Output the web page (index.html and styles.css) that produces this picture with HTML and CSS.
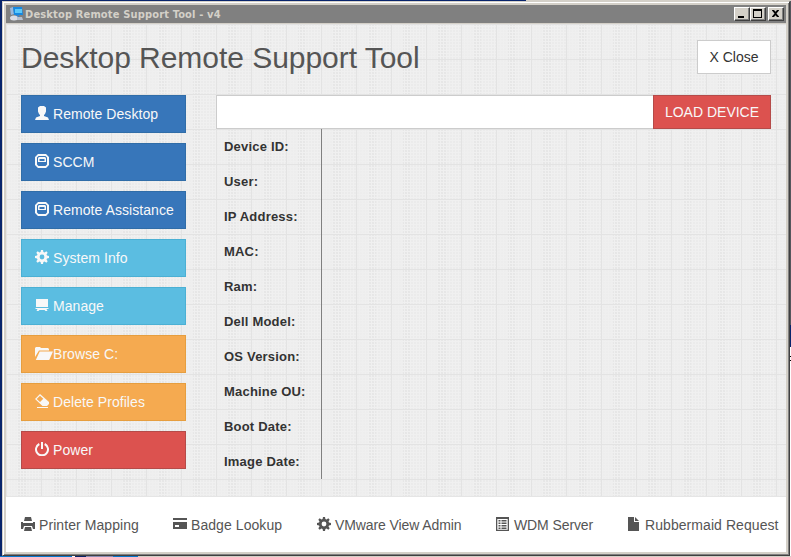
FILE: index.html
```html
<!DOCTYPE html>
<html lang="en">
<head>
<meta charset="utf-8">
<title>Desktop Remote Support Tool - v4</title>
<link rel="stylesheet" href="styles.css">
</head>
<body>
<svg width="0" height="0" class="defs">
  <symbol id="user" viewBox="0 0 14 14"><path d="M5 0h4l2 1.500v4L10 8 9 9v1l4 1.500L14 14H0l1-2.500L5 10V9L4 8 3 5.500v-4z"/></symbol>
  <symbol id="drive" viewBox="0 0 14 14"><path fill-rule="evenodd" d="M3 0h8l3 3v8l-3 3H3l-3-3V3zM3.500 2 2 3.500v7L3.500 12h7l1.500-1.500v-7L10.500 2zM3 4l1-1h6l1 1v4H3zm1.500 1v2h5V5z"/></symbol>
  <symbol id="cog" viewBox="0 0 14 14"><path fill-rule="evenodd" d="M6 0h2l.4 2 1.200.5L11.300 1.300l1.400 1.400-1.200 1.700.5 1.200 2 .4v2l-2 .4-.5 1.200 1.200 1.700-1.400 1.400-1.700-1.200-1.200.5L8 14H6l-.4-2-1.200-.5-1.700 1.200-1.400-1.400 1.200-1.700L2 8.400 0 8V6l2-.4.500-1.200-1.200-1.700 1.400-1.400 1.700 1.200L5.600 2zM7 4.600a2.400 2.400 0 1 0 0 4.800 2.400 2.400 0 0 0 0-4.800z"/></symbol>
  <symbol id="blackboard" viewBox="0 0 14 14"><path d="M1 1h12v8H1zM0.500 10h13v1h-2l1 2h-2l-1-1h-5l-1 1h-2l1-2h-2z"/></symbol>
  <symbol id="folder" viewBox="0 0 18 14"><path d="M0 2 1 1h4l1 1h7l1 1v1.500H4L0 11zM4.700 5.500H18L14.200 14H.8z"/></symbol>
  <symbol id="eraser" viewBox="0 0 14 14"><path fill-rule="evenodd" d="M5 0 14 8v2l-2 2H7.500L0 5zM5 1.700 1.700 5 5 8l3.300-3.300zM2 13h11v1H2z"/></symbol>
  <symbol id="power" viewBox="0 0 14 14"><path d="M4.300 2A6 6 0 1 0 9.700 2" fill="none" stroke="currentColor" stroke-width="2"/><path d="M6 0h2v7H6z"/></symbol>
  <symbol id="printer" viewBox="0 0 14 14"><path d="M4 0h6l1 4H3zM0 5h2v1h10V5h2v7h-2l-1-3H3l-1 3H0zM4 10h6l1 4H3z"/></symbol>
  <symbol id="card" viewBox="0 0 14 14"><path fill-rule="evenodd" d="M0 1h14v2H0zM0 5h14v7H0zM2 8v2h4V8z"/></symbol>
  <symbol id="list" viewBox="0 0 14 14"><path fill-rule="evenodd" d="M0 0h13v14H0zM1.300 2v10.700h10.400V2zM2.500 3h2v1.500h-2zm3 0h5v1.500h-5zm-3 2.500h2V7h-2zm3 0h5V7h-5zm-3 2.500h2v1.500h-2zm3 0h5v1.500h-5zm-3 2.500h2V12h-2zm3 0h5V12h-5z"/></symbol>
  <symbol id="file" viewBox="0 0 14 14"><path d="M1 0h6v5h5v9H1zM8 0l4 4H8z"/></symbol>
</svg>
<div class="window">
  <div class="titlebar">
    <svg class="appicon" width="16" height="16" viewBox="0 0 16 16"><path d="M1 2l3-1 1 7-3 1z" fill="#9ab8dc"/><path d="M4 1h9l1 8H5z" fill="#1589e2"/><path d="M6 3h7v4H6z" fill="#5ac8fa"/><path d="M7 9h3l1 3H6z" fill="#4583bd"/><ellipse cx="5" cy="12" rx="4" ry="2.500" fill="#d9dce4"/><path d="M8 11h5l1 3H8z" fill="#b6bfce"/></svg>
    <span class="caption">Desktop Remote Support Tool - v4</span>
    <div class="controls">
      <span class="ctl"><svg width="14" height="12"><path d="M3 8h6v2H3z"/></svg></span><span class="ctl"><svg width="14" height="12"><path fill-rule="evenodd" d="M2 1h9v9H2zM3 3v6h7V3z"/></svg></span><span class="ctl last"><svg width="14" height="12"><path d="M3 2h2l1.500 1.700L8 2h2v.5L7.500 5.500 10 8.500V9H8L6.500 7.300 5 9H3v-.5l2.500-3L3 2.500z"/></svg></span>
    </div>
  </div>
  <div class="main">
    <header><h1>Desktop Remote Support Tool</h1><button class="close">X Close</button></header>
    <div class="columns">
      <nav>
        <a class="btn blue"><svg><use href="#user"/></svg><span>Remote Desktop</span></a>
        <a class="btn blue"><svg><use href="#drive"/></svg><span>SCCM</span></a>
        <a class="btn blue"><svg><use href="#drive"/></svg><span>Remote Assistance</span></a>
        <a class="btn cyan"><svg><use href="#cog"/></svg><span>System Info</span></a>
        <a class="btn cyan"><svg><use href="#blackboard"/></svg><span>Manage</span></a>
        <a class="btn orange"><svg class="wide"><use href="#folder"/></svg><span>Browse C:</span></a>
        <a class="btn orange"><svg><use href="#eraser"/></svg><span>Delete Profiles</span></a>
        <a class="btn red"><svg><use href="#power"/></svg><span>Power</span></a>
      </nav>
      <section>
        <div class="search"><input type="text" aria-label="Device"><button class="load">LOAD DEVICE</button></div>
        <dl>
          <dt>Device ID:</dt><dt>User:</dt><dt>IP Address:</dt><dt>MAC:</dt><dt>Ram:</dt><dt>Dell Model:</dt><dt>OS Version:</dt><dt>Machine OU:</dt><dt>Boot Date:</dt><dt>Image Date:</dt>
        </dl>
      </section>
    </div>
  </div>
  <footer>
    <a><svg><use href="#printer"/></svg>Printer Mapping</a>
    <a><svg><use href="#card"/></svg>Badge Lookup</a>
    <a class="tight"><svg><use href="#cog"/></svg>VMware View Admin</a>
    <a class="tight"><svg><use href="#list"/></svg>WDM Server</a>
    <a><svg><use href="#file"/></svg>Rubbermaid Request</a>
  </footer>
</div>
</body>
</html>
```
FILE: styles.css
```css
* { box-sizing: border-box; }
body {
  margin: 0;
  width: 791px;
  height: 557px;
  overflow: hidden;
  padding: 1px 1px 1px 2px;
  background:
    linear-gradient(90deg, #0878d0 72px, #fff 72px 75px, #092369 75px 86px, #8c8db5 86px 113px, #0878d0 113px 138px, #d4d0c8 138px) 0 556px / 791px 1px no-repeat,
    linear-gradient(#d4d0c8, #d4d0c8) 526px 0 / 265px 1px no-repeat,
    linear-gradient(#55565c 325px, #08246b 325px 347px, #fff 347px 356px, #000 356px 357px, #fff 357px 360px, #000 360px 361px, #fff 361px) 790px 0 / 1px 557px no-repeat,
    #08246b;
  font: 14px "Liberation Sans", Arial, sans-serif;
  color: #333;
}
.defs { display: none; }
svg { fill: currentColor; display: block; }
.window {
  width: 788px;
  height: 555px;
  background: #d4d0c8;
  border: 1px solid;
  border-color: #d4d0c8 #404040 #404040 #d4d0c8;
  box-shadow: inset 1px 1px #fff, inset -1px -1px #808080;
  padding: 3px;
}
.titlebar {
  height: 18px;
  background: #808080;
  display: flex;
  align-items: center;
  padding-left: 3px;
}
.caption {
  font: bold 11px "DejaVu Sans Condensed", "DejaVu Sans", sans-serif;
  font-stretch: condensed;
  letter-spacing: .16px;
  color: #d4d0c8;
  white-space: nowrap;
}
.controls { margin-left: auto; display: flex; padding-right: 2px; }
.ctl {
  width: 16px;
  height: 14px;
  background: #d4d0c8;
  color: #000;
  border: 1px solid;
  border-color: #fff #404040 #404040 #fff;
  box-shadow: inset -1px -1px #808080;
}
.last { margin-left: 2px; }
.main {
  height: 473px;
  border-top: 1px solid #d4d0c8;
  padding: 0 15px;
  background:
    linear-gradient(90deg, transparent 34px, #e3e3e3 34px) 1px 0 / 35px 35px,
    linear-gradient(transparent 34px, #e3e3e3 34px) 0 1px / 35px 35px,
    linear-gradient(90deg, rgba(239,239,239,.8) 12px, transparent 12px 20px, rgba(239,239,239,.5) 20px) 0 0 / 35px 35px,
    radial-gradient(circle at 1px 1px, #e6e6e6 .7px, transparent 1px) 0 0 / 3px 3px,
    #f0f0f0;
}
header { height: 71px; display: flex; justify-content: space-between; align-items: flex-start; }
h1 { margin: 17px 0 0; font-size: 30px; line-height: 34px; font-weight: normal; letter-spacing: -.04px; color: #555; white-space: nowrap; }
button { font: inherit; padding: 0; border-radius: 0; white-space: nowrap; }
.close { margin-top: 16px; width: 74px; height: 34px; background: #fff; border: 1px solid #ccc; color: #333; }
.columns { display: flex; gap: 30px; align-items: flex-start; }
nav { width: 165px; display: grid; gap: 10px; }
.btn {
  height: 38px;
  display: flex;
  align-items: center;
  padding-left: 13px;
  border: 1px solid;
  color: #f8f8f8;
  letter-spacing: .06px;
  white-space: nowrap;
}
.btn svg { width: 14px; height: 14px; margin: -2px 4px 0 0; flex: none; }
.btn svg.wide { width: 18px; margin-right: 0; }
.blue { background: #3776ba; border-color: #306da8; }
.cyan { background: #5bbde1; border-color: #4bb0d4; }
.orange { background: #f5aa50; border-color: #e69e3f; }
.red { background: #dc524f; border-color: #b54b49; }
section { width: 555px; }
.search { display: flex; height: 34px; }
input { width: 437px; border: 1px solid #ccc; border-right: 0; background: #fff; padding: 0 12px; }
.load { width: 118px; border: 1px solid #b54b49; background: #dc524f; color: #f8f8f8; padding-bottom: 1px; }
dl { margin: 0; width: 106px; border-right: 1px solid #808080; }
dt { height: 35px; line-height: 35px; padding-left: 8px; font-size: 13px; font-weight: bold; letter-spacing: .2px; white-space: nowrap; }
footer {
  height: 56px;
  background: #fff;
  border-top: 1px solid #e5e5e5;
  display: grid;
  grid-template-columns: 152px 144px 179px 131px auto;
  align-items: center;
  padding-left: 15px;
  color: #555;
  letter-spacing: .07px;
}
footer a { display: flex; align-items: center; gap: 4px; white-space: nowrap; }
footer .tight { letter-spacing: -.1px; }
footer svg { width: 14px; height: 14px; margin-top: -1px; }
```
